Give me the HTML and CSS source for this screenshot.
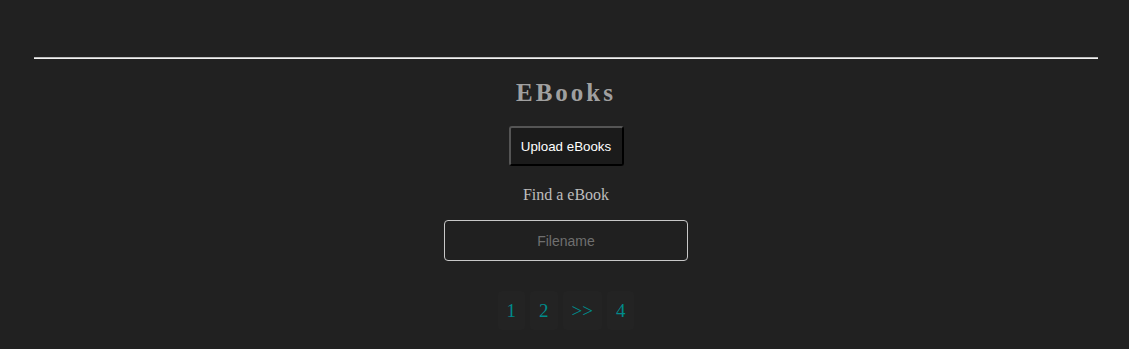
FILE: index.html
```
<!DOCTYPE html>
<html>
<head>
<meta charset="utf-8">
<link rel="stylesheet" href="styles.css">
</head>
<body>
<div class="page">
  <hr class="rule">
  <h1 class="title">EBooks</h1>
  <button class="upload">Upload eBooks</button>
  <p class="find">Find a eBook</p>
  <input class="search" type="text" placeholder="Filename">
  <nav class="pager">
    <a class="page-link">1</a>
    <a class="page-link">2</a>
    <a class="page-link">&gt;&gt;</a>
    <a class="page-link">4</a>
  </nav>
</div>
</body>
</html>
```
FILE: styles.css
```
html, body {
  margin: 0;
  padding: 0;
  background: #212121;
}
body {
  font-family: "Liberation Serif", "Times New Roman", serif;
  height: 349px;
  overflow: hidden;
}
.page {
  padding: 57px 31px 0 34px;
  display: flex;
  flex-direction: column;
  align-items: center;
}
.rule {
  align-self: stretch;
  margin: 0;
  height: 0;
  border: none;
  border-top: 1px solid #bdbdbd;
  border-bottom: 1px solid #f2f2f2;
}
.title {
  margin: 19px 0 0 0;
  font-size: 25px;
  font-weight: bold;
  letter-spacing: 3px;
  color: #a0a0a0;
  line-height: 29px;
}
.upload {
  margin-top: 19px;
  width: 115px;
  height: 40px;
  background: #1b1b1b;
  color: #ffffff;
  font-family: "Liberation Sans", Arial, sans-serif;
  font-size: 13.333px;
  border: 2px outset #4a4a4a;
  border-color: #555555 #0a0a0a #0a0a0a #555555;
  border-radius: 3px;
  padding: 0;
}
.find {
  margin: 19px 0 0 0;
  font-size: 16px;
  color: #bdbdbd;
  line-height: 20px;
}
.search {
  margin-top: 15px;
  width: 244px;
  height: 41px;
  box-sizing: border-box;
  background: #202020;
  border: 1px solid #c8c8c8;
  border-radius: 4px;
  text-align: center;
  font-family: "Liberation Sans", Arial, sans-serif;
  font-size: 14px;
  color: #ccc;
}
.search::placeholder {
  color: #6f6f6f;
}
.pager {
  margin-top: 30px;
  display: flex;
  gap: 5px;
}
.page-link {
  display: block;
  padding: 0 9px;
  height: 39px;
  line-height: 39px;
  background: #232323;
  border-radius: 4px;
  color: #008b8b;
  font-size: 19px;
}
```
